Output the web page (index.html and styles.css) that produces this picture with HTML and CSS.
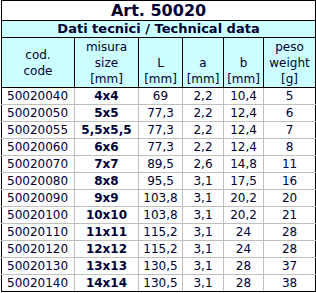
FILE: index.html
```html
<!DOCTYPE html>
<html>
<head>
<meta charset="utf-8">
<link rel="stylesheet" href="styles.css">
</head>
<body>
<div class="wrap">
<table class="spec">
  <colgroup>
    <col class="c1"><col class="c2"><col class="c3"><col class="c4"><col class="c5"><col class="c6">
  </colgroup>
  <thead>
    <tr class="title"><th colspan="6">Art. 50020</th></tr>
    <tr class="sub"><th colspan="6">Dati tecnici / Technical data</th></tr>
    <tr class="head">
      <th>cod.<br>code</th>
      <th>misura<br>size<br>[mm]</th>
      <th><br>L<br>[mm]</th>
      <th><br>a<br>[mm]</th>
      <th><br>b<br>[mm]</th>
      <th>peso<br>weight<br>[g]</th>
    </tr>
  </thead>
  <tbody>
    <tr><td class="code">50020040</td><td class="size">4x4</td><td>69</td><td>2,2</td><td>10,4</td><td>5</td></tr>
    <tr><td class="code">50020050</td><td class="size">5x5</td><td>77,3</td><td>2,2</td><td>12,4</td><td>6</td></tr>
    <tr><td class="code">50020055</td><td class="size">5,5x5,5</td><td>77,3</td><td>2,2</td><td>12,4</td><td>7</td></tr>
    <tr><td class="code">50020060</td><td class="size">6x6</td><td>77,3</td><td>2,2</td><td>12,4</td><td>8</td></tr>
    <tr><td class="code">50020070</td><td class="size">7x7</td><td>89,5</td><td>2,6</td><td>14,8</td><td>11</td></tr>
    <tr><td class="code">50020080</td><td class="size">8x8</td><td>95,5</td><td>3,1</td><td>17,5</td><td>16</td></tr>
    <tr><td class="code">50020090</td><td class="size">9x9</td><td>103,8</td><td>3,1</td><td>20,2</td><td>20</td></tr>
    <tr><td class="code">50020100</td><td class="size">10x10</td><td>103,8</td><td>3,1</td><td>20,2</td><td>21</td></tr>
    <tr><td class="code">50020110</td><td class="size">11x11</td><td>115,2</td><td>3,1</td><td>24</td><td>28</td></tr>
    <tr><td class="code">50020120</td><td class="size">12x12</td><td>115,2</td><td>3,1</td><td>24</td><td>28</td></tr>
    <tr><td class="code">50020130</td><td class="size">13x13</td><td>130,5</td><td>3,1</td><td>28</td><td>37</td></tr>
    <tr><td class="code">50020140</td><td class="size">14x14</td><td>130,5</td><td>3,1</td><td>28</td><td>38</td></tr>
  </tbody>
</table>
</div>
</body>
</html>
```
FILE: styles.css
```css
html, body {
  margin: 0;
  padding: 0;
  background: #ffffff;
}
.wrap {
  padding: 0 0 0 1px;
}
.spec {
  border-collapse: collapse;
  table-layout: fixed;
  width: 314px;
  font-family: "DejaVu Sans", Verdana, sans-serif;
  font-size: 12px;
  color: #000033;
  border: 1px solid #000000;
}
.c1 { width: 73px; }
.c2 { width: 64px; }
.c3 { width: 44px; }
.c4 { width: 41px; }
.c5 { width: 40px; }
.c6 { width: 52px; }
.spec th, .spec td {
  padding: 0;
  text-align: center;
  white-space: nowrap;
  overflow: hidden;
}
.spec th {
  border: 1px solid #000000;
  background: #ccffff;
  font-weight: normal;
  line-height: 16px;
}
.title th {
  background: #ffffff;
  font-size: 16px;
  font-weight: bold;
  height: 19px;
  line-height: 19px;
}
.sub th {
  font-size: 13px;
  font-weight: bold;
  height: 16px;
  line-height: 16px;
}
.head th {
  height: 49px;
  vertical-align: middle;
}
.spec td {
  border: 1px solid #c0c0c0;
  height: 16px;
  line-height: 16px;
}
.spec tbody tr:first-child td {
  border-top: 1px solid #000000;
}
.spec tbody td:first-child {
  border-left: 1px solid #000000;
}
.spec tbody td:last-child {
  border-right: 1px solid #000000;
}
.spec tbody tr:last-child td {
  border-bottom: 1px solid #000000;
}
.spec td.code {
  text-align: left;
  padding-left: 5px;
}
.spec td.size {
  font-weight: bold;
}
```
